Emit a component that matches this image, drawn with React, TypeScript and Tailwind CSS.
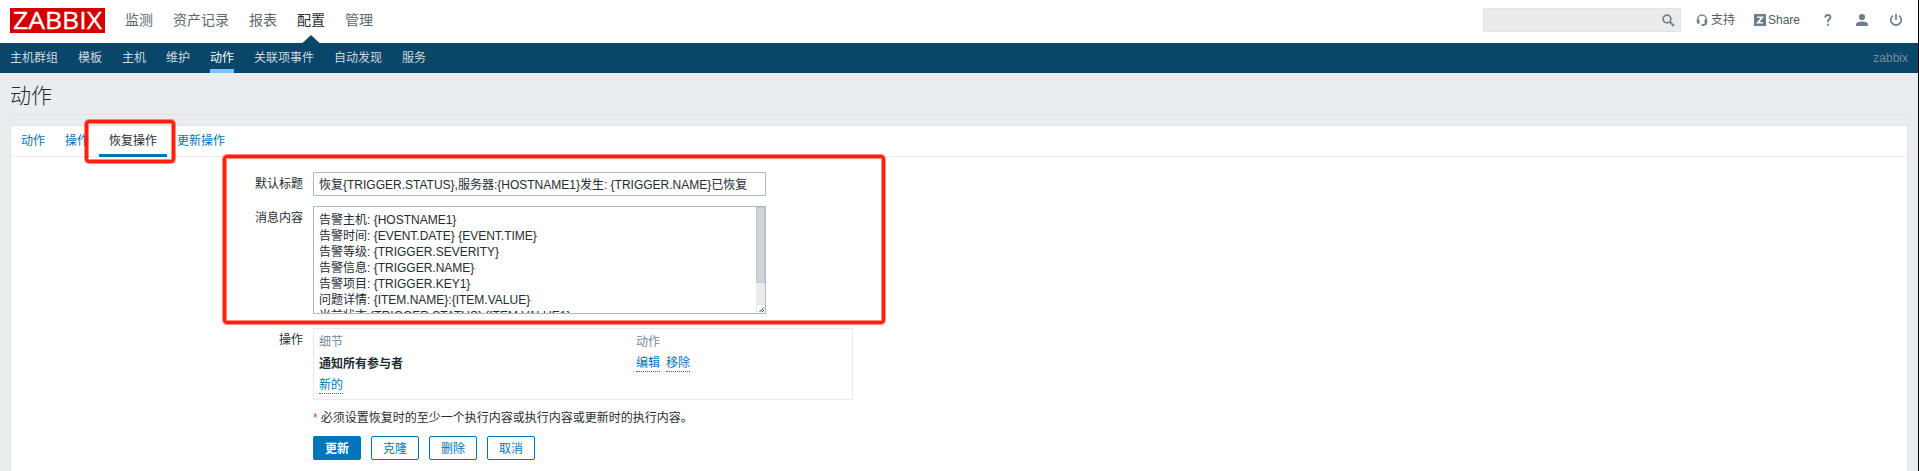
import React from 'react';

const mainMenu = ['监测', '资产记录', '报表', '配置', '管理'];
const subMenu = ['主机群组', '模板', '主机', '维护', '动作', '关联项事件', '自动发现', '服务'];
const message = [
  '告警主机: {HOSTNAME1}',
  '告警时间: {EVENT.DATE} {EVENT.TIME}',
  '告警等级: {TRIGGER.SEVERITY}',
  '告警信息: {TRIGGER.NAME}',
  '告警项目: {TRIGGER.KEY1}',
  '问题详情: {ITEM.NAME}:{ITEM.VALUE}',
  '当前状态:{TRIGGER.STATUS}:{ITEM.VALUE1}',
];

function Header() {
  return (
    <header className="flex h-[43px] items-start bg-white pl-[10px]">
      <div className="mt-2 flex h-[25px] w-[95px] items-center justify-center bg-[#d40000]">
        <svg className="overflow-visible" width="95" height="25" viewBox="0 0 95 25">
          <text x="3" y="21" fontSize="24" fill="#fff" stroke="#fff" strokeWidth="0.300" textLength="89" lengthAdjust="spacingAndGlyphs" fontFamily="Open Sans, sans-serif">ZABBIX</text>
        </svg>
      </div>
      <nav className="ml-5 flex h-[43px] gap-5 text-[14px] leading-[40px] text-[#5c686e]">
        {mainMenu.map((m) => (
          <a key={m} className={m === '配置' ? 'relative text-[#1f2c33]' : ''}>
            {m}
            {m === '配置' && (
              <svg className="absolute top-[35px] left-[5px]" width="18" height="8" viewBox="0 0 18 8">
                <path d="M0.5 8L9 0L17.5 8Z" fill="#0a466a" />
              </svg>
            )}
          </a>
        ))}
      </nav>
      <div className="mt-2 ml-auto flex h-6 items-center text-[12px] text-[#4f5b61]">
        <div className="flex h-6 w-[198px] items-center justify-end border border-[#dfe4e7] bg-[#ebebeb] pr-[5px]">
          <svg width="13" height="13" viewBox="0 0 13 13" fill="none" stroke="#6b808c">
            <circle cx="5" cy="5" r="3.9" strokeWidth="1.7" />
            <path d="M7.9 7.9L12 12" strokeWidth="2" />
          </svg>
        </div>
        <a className="ml-[15px] flex items-center">
          <svg className="mr-[3px]" width="12" height="12" viewBox="0 0 12 12">
            <path d="M1.6 7V5.5a4.4 4.4 0 0 1 8.8 0V8.500q0 2.500-3.400 2.500" fill="none" stroke="#6b808c" strokeWidth="1.400" />
            <path d="M0.800 5.500H3.500V9.800H2.300Q0.800 9.800 0.800 8.200ZM11.200 5.500H8.500V9.800H9.700Q11.200 9.800 11.200 8.200ZM5.500 10.300H8V12H5.500Z" fill="#6b808c" />
          </svg>
          支持
        </a>
        <a className="ml-[19px] flex items-center">
          <svg className="mr-[2px]" width="12" height="12" viewBox="0 0 12 12">
            <rect width="12" height="12" rx="0.500" fill="#6b808c" />
            <path d="M3.200 3.300H8.300L3.800 8.700H8.900" fill="none" stroke="#fff" strokeWidth="1.600" />
          </svg>
          Share
        </a>
        <svg className="ml-[24px]" width="8" height="12" viewBox="0 0 8 12" fill="none" stroke="#6b808c" strokeWidth="1.800">
          <path d="M1.200 3.600Q1.200 1 3.800 1T6.500 3.300C6.500 5.200 3.900 5 3.900 8.200M3.900 9.800V11.700" />
        </svg>
        <svg className="ml-[24px]" width="12" height="12" viewBox="0 0 12 12" fill="#6b808c">
          <circle cx="6" cy="3.100" r="3.100" />
          <path d="M0 12V10Q1.500 7.600 6 7.600T12 10V12Z" />
        </svg>
        <svg className="mr-[16px] ml-[22px]" width="12" height="12" viewBox="0 0 12 12" fill="none" stroke="#6b808c" strokeWidth="1.700">
          <path d="M6 0V6M3 1.600A5.200 5.200 0 1 0 9 1.600" />
        </svg>
      </div>
    </header>
  );
}

function Label({ children }: { children: React.ReactNode }) {
  return <div className="w-[292px] shrink-0 text-right leading-6">{children}</div>;
}

function Link({ children }: { children: React.ReactNode }) {
  return <a className="block h-[18px] w-fit border-b border-dotted border-[#0275b8] leading-[19px] text-[#0275b8]">{children}</a>;
}

function Mark({ className }: { className: string }) {
  return (
    <div
      className={
        'pointer-events-none absolute rounded-[4px] border-[3px] border-[#ff2010] shadow-[0_0_0_1px_#ff201088,inset_0_0_0_1px_#ff201088] ' +
        className
      }
    />
  );
}

export default function App() {
  return (
    <div className="h-[471px] overflow-hidden border-r border-black bg-[#e9edf0] font-['Liberation_Sans','Noto_Sans_CJK_SC',sans-serif] text-[12px] text-[#1f2c33]">
      <div className="relative flex h-full flex-col">
        <Header />
        <nav className="flex h-[30px] shrink-0 gap-5 bg-[#0a466a] px-[10px] leading-[30px] text-[#ccd9e0]">
          {subMenu.map((m) => (
            <a key={m} className={m === '动作' ? 'h-[30px] border-b-4 border-[#7cc5f5] text-white' : ''}>{m}</a>
          ))}
          <span className="ml-auto text-[#768d99]">zabbix</span>
        </nav>
        <h1 className="mx-[10px] h-[42px] shrink-0 border-b border-[#dfe4e7] text-[21px] leading-[45px] font-light">动作</h1>
        <main className="mx-[10px] mt-[10px] flex-1 border border-b-0 border-[#dfe4e7] bg-white">
          <div className="flex h-[31px] border-b border-[#ebeef0] leading-[30px] text-[#0275b8]">
            <a className="px-[10px]">动作</a>
            <a className="px-[10px]">操作</a>
            <a className="h-[31px] border-b-[3px] border-[#0275b8] px-[10px] text-[#1f2c33]">恢复操作</a>
            <a className="px-[10px]">更新操作</a>
          </div>
          <div className="flex flex-col pt-[15px]">
            <div className="flex gap-[10px]">
              <Label>默认标题</Label>
              <div className="h-6 w-[453px] border border-[#acbbc2] px-[5px] leading-[24px] whitespace-nowrap">
                {'恢复{TRIGGER.STATUS},服务器:{HOSTNAME1}发生: {TRIGGER.NAME}已恢复'}
              </div>
            </div>
            <div className="mt-[10px] flex gap-[10px]">
              <Label>消息内容</Label>
              <div className="flex h-[108px] w-[453px] justify-between overflow-hidden border border-[#acbbc2] pl-[5px]">
                <div className="pt-[5px] leading-[16px] whitespace-nowrap">
                  {message.map((m) => (
                    <div key={m} className="h-4">{m}</div>
                  ))}
                </div>
                <div className="flex w-[9px] flex-col bg-[#ebebeb]">
                  <div className="h-[76px] border border-[#bccace] bg-[#ccd5d9]" />
                  <svg className="mt-auto border-t border-l border-[#dfe4e7] bg-white" width="9" height="9" viewBox="0 0 8 8" stroke="#333">
                    <path d="M2.500 7L7 2.500M5 7L7 5" strokeWidth="1" />
                  </svg>
                </div>
              </div>
            </div>
            <div className="mt-[14px] flex gap-[10px]">
              <Label>操作</Label>
              <div className="grid h-[72px] w-[540px] grid-cols-[317px_1fr] grid-rows-[24px_22px_22px] border border-[#e7ebee] pl-[5px]">
                <div className="leading-[27px] text-[#768d99]">细节</div>
                <div className="leading-[27px] text-[#768d99]">动作</div>
                <b className="pt-[2px] leading-[18px]">通知所有参与者</b>
                <div className="flex gap-[6px] pt-[1px]">
                  <Link>编辑</Link>
                  <Link>移除</Link>
                </div>
                <div className="pt-[1px]">
                  <Link>新的</Link>
                </div>
              </div>
            </div>
            <div className="mt-[10px] ml-[302px] h-4 leading-[16px]">
              <span className="mr-[3px] text-[#e33734]">*</span>必须设置恢复时的至少一个执行内容或执行内容或更新时的执行内容。
            </div>
            <div className="mt-[10px] ml-[302px] flex gap-[10px] text-center leading-[26px] text-[#0275b8]">
              <button className="h-6 w-12 rounded-[2px] bg-[#0275b8] leading-[26px] font-bold text-white">更新</button>
              {['克隆', '删除', '取消'].map((b) => (
                <button key={b} className="h-6 w-12 rounded-[2px] border border-[#0275b8] leading-[24px]">{b}</button>
              ))}
            </div>
          </div>
        </main>
        <Mark className="top-[120px] left-[85px] h-[43px] w-[90px]" />
        <Mark className="top-[155px] left-[223px] h-[169px] w-[662px]" />
      </div>
    </div>
  );
}
